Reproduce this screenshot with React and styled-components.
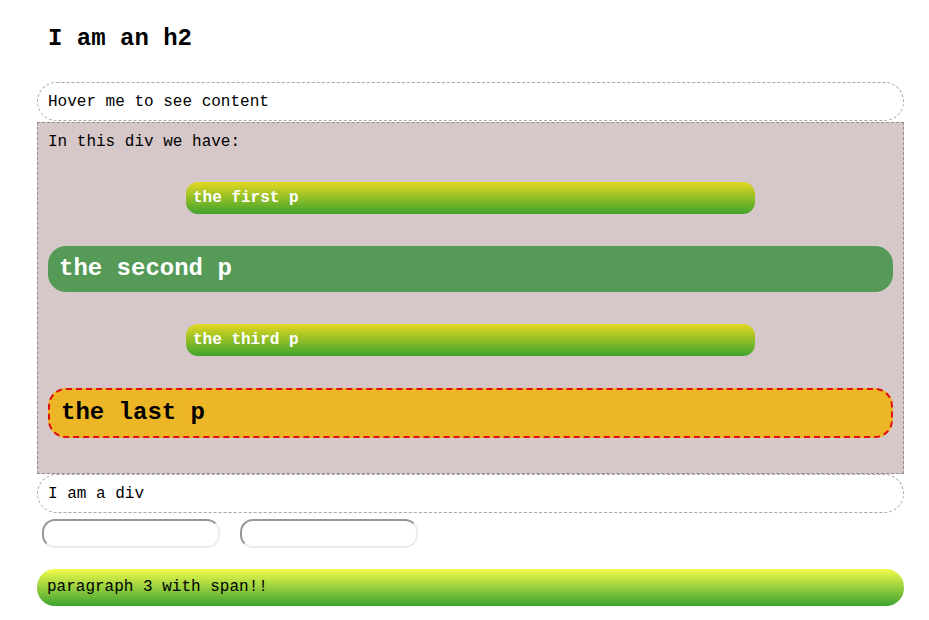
import React from "react";
import styled, { createGlobalStyle } from "styled-components";

const Global = createGlobalStyle`
  html, body { margin: 0; padding: 0; background: #fff; }
  body { font-family: "Liberation Mono", "Courier New", monospace; color: #000; }
`;

const Page = styled.div`
  padding: 25px 0 0 37px;
  width: 867px;
`;

const Title = styled.h2`
  margin: 0 0 30px;
  padding: 0 11px;
  font-size: 24px;
  line-height: 27px;
  font-weight: bold;
`;

const Pill = styled.div`
  box-sizing: border-box;
  height: 39px;
  padding: 9px 10px;
  line-height: 20px;
  border: 1px dashed #a8a8a8;
  border-radius: 20px;
  font-size: 16px;
  background: #fff;
`;

const Content = styled.div`
  box-sizing: border-box;
  background: #d6c8c8;
  border: 1px dashed #8f8f8f;
  padding: 10px 10px 3px;
  font-size: 16px;
  line-height: 18px;
  margin-top: 1px;
`;

const Intro = styled.div`
  margin-bottom: 31px;
`;

const SmallP = styled.p`
  margin: 0 auto 32px;
  width: 569px;
  box-sizing: border-box;
  padding: 7px 7px;
  font-size: 16px;
  line-height: 18px;
  font-weight: bold;
  color: #fff;
  border-radius: 12px;
  background: linear-gradient(to bottom, #e3d821, #3fa42d);
`;

const BigP = styled.p`
  margin: 0 0 32px;
  padding: 10px 11px;
  font-size: 24px;
  line-height: 26px;
  font-weight: bold;
  border-radius: 18px;
  color: ${(p) => (p.$last ? "#000" : "#fff")};
  background: ${(p) => (p.$last ? "#edb626" : "#559a57")};
  border: ${(p) => (p.$last ? "2px dashed #e0100e" : "0")};
`;

const Inputs = styled.div`
  display: flex;
  gap: 20px;
  margin: 6px 0 0 5px;
`;

const Field = styled.input`
  box-sizing: border-box;
  width: 178px;
  height: 29px;
  border: 2px solid;
  border-color: #979797 #ececec #ececec #979797;
  border-radius: 13px;
  background: #fff;
  padding: 0 8px;
  font-family: inherit;
  font-size: 14px;
  outline: none;
`;

const Para = styled.p`
  margin: 21px 0 0;
  box-sizing: border-box;
  height: 37px;
  padding: 9px 10px;
  line-height: 19px;
  font-size: 16px;
  border-radius: 18px;
  background: linear-gradient(to bottom, #f2fb4a, #3da331);
`;

export default function App() {
  return (
    <>
      <Global />
      <Page>
        <Title>I am an h2</Title>
        <Pill>Hover me to see content</Pill>
        <Content>
          <Intro>In this div we have:</Intro>
          <SmallP>the first p</SmallP>
          <BigP>the second p</BigP>
          <SmallP>the third p</SmallP>
          <BigP $last>the last p</BigP>
        </Content>
        <Pill>I am a div</Pill>
        <Inputs>
          <Field type="text" />
          <Field type="text" />
        </Inputs>
        <Para>
          paragraph 3 with <span>span!!</span>
        </Para>
      </Page>
    </>
  );
}
